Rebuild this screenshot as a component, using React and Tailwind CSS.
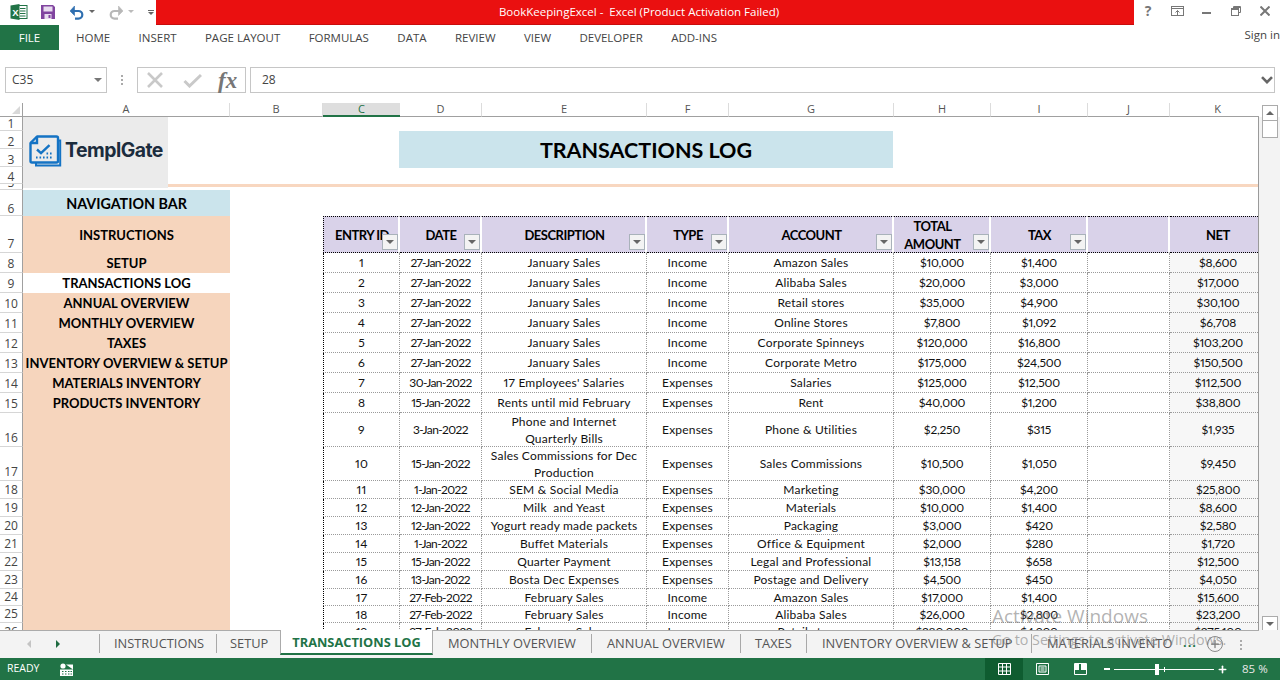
import React from 'react';
import { Plus } from 'lucide-react';

const cols = 'grid-cols-[23px_207px_93px_77px_82px_165px_82px_165px_97px_97px_82px_96px]';

const columnHeads = [
  ['A', 207], ['B', 93], ['C', 77], ['D', 82], ['E', 165], ['F', 82],
  ['G', 165], ['H', 97], ['I', 97], ['J', 82], ['K', 96],
];

const rowHeads = [
  ['1', 14], ['2', 18], ['3', 18], ['4', 17], ['5', 6], ['6', 26], ['7', 37], ['8', 20], ['9', 20],
  ['10', 20], ['11', 20], ['12', 20], ['13', 20], ['14', 20], ['15', 20], ['16', 34], ['17', 34],
  ['18', 18], ['19', 18], ['20', 18], ['21', 18], ['22', 18], ['23', 18], ['24', 17], ['25', 17], ['26', 18],
];

const navItems = [
  { label: 'INSTRUCTIONS', row: 'row-[7]' },
  { label: 'SETUP', row: 'row-[8]' },
  { label: 'TRANSACTIONS LOG', row: 'row-[9]', active: true },
  { label: 'ANNUAL OVERVIEW', row: 'row-[10]' },
  { label: 'MONTHLY OVERVIEW', row: 'row-[11]' },
  { label: 'TAXES', row: 'row-[12]' },
  { label: 'INVENTORY OVERVIEW & SETUP', row: 'row-[13]' },
  { label: 'MATERIALS INVENTORY', row: 'row-[14]' },
  { label: 'PRODUCTS INVENTORY', row: 'row-[15]' },
];

const headers = [
  ['ENTRY ID', true, 'col-[4]'],
  ['DATE', true, 'col-[5]'],
  ['DESCRIPTION', true, 'col-[6]'],
  ['TYPE', true, 'col-[7]'],
  ['ACCOUNT', true, 'col-[8]'],
  ['TOTAL AMOUNT', true, 'col-[9]'],
  ['TAX', true, 'col-[10]'],
  ['', false, 'col-[11]'],
  ['NET', false, 'col-[12]'],
];

const entries = [
  ['1', '27-Jan-2022', 'January Sales', 'Income', 'Amazon Sales', '$10,000', '$1,400', '$8,600'],
  ['2', '27-Jan-2022', 'January Sales', 'Income', 'Alibaba Sales', '$20,000', '$3,000', '$17,000'],
  ['3', '27-Jan-2022', 'January Sales', 'Income', 'Retail stores', '$35,000', '$4,900', '$30,100'],
  ['4', '27-Jan-2022', 'January Sales', 'Income', 'Online Stores', '$7,800', '$1,092', '$6,708'],
  ['5', '27-Jan-2022', 'January Sales', 'Income', 'Corporate Spinneys', '$120,000', '$16,800', '$103,200'],
  ['6', '27-Jan-2022', 'January Sales', 'Income', 'Corporate Metro', '$175,000', '$24,500', '$150,500'],
  ['7', '30-Jan-2022', "17 Employees' Salaries", 'Expenses', 'Salaries', '$125,000', '$12,500', '$112,500'],
  ['8', '15-Jan-2022', 'Rents until mid February', 'Expenses', 'Rent', '$40,000', '$1,200', '$38,800'],
  ['9', '3-Jan-2022', 'Phone and Internet Quarterly Bills', 'Expenses', 'Phone & Utilities', '$2,250', '$315', '$1,935'],
  ['10', '15-Jan-2022', 'Sales Commissions for Dec Production', 'Expenses', 'Sales Commissions', '$10,500', '$1,050', '$9,450'],
  ['11', '1-Jan-2022', 'SEM & Social Media', 'Expenses', 'Marketing', '$30,000', '$4,200', '$25,800'],
  ['12', '12-Jan-2022', 'Milk  and Yeast', 'Expenses', 'Materials', '$10,000', '$1,400', '$8,600'],
  ['13', '12-Jan-2022', 'Yogurt ready made packets', 'Expenses', 'Packaging', '$3,000', '$420', '$2,580'],
  ['14', '1-Jan-2022', 'Buffet Materials', 'Expenses', 'Office & Equipment', '$2,000', '$280', '$1,720'],
  ['15', '15-Jan-2022', 'Quarter Payment', 'Expenses', 'Legal and Professional', '$13,158', '$658', '$12,500'],
  ['16', '13-Jan-2022', 'Bosta Dec Expenses', 'Expenses', 'Postage and Delivery', '$4,500', '$450', '$4,050'],
  ['17', '27-Feb-2022', 'February Sales', 'Income', 'Amazon Sales', '$17,000', '$1,400', '$15,600'],
  ['18', '27-Feb-2022', 'February Sales', 'Income', 'Alibaba Sales', '$26,000', '$2,800', '$23,200'],
  ['19', '27-Feb-2022', 'February Sales', 'Income', 'Retail stores', '$280,000', '$4,900', '$275,100'],
];

const tabs = [
  ['INSTRUCTIONS', 'w-[117px] pl-[14px]'],
  ['SETUP', 'w-[64px] pl-[13px]'],
];

const tabsAfter = [
  ['MONTHLY OVERVIEW', 'w-[159px] pl-[15px]'],
  ['ANNUAL OVERVIEW', 'w-[149px] pl-[15px]'],
  ['TAXES', 'w-[66px] pl-[14px]'],
  ['INVENTORY OVERVIEW & SETUP', 'w-[225px] pl-[15px]'],
];

const cellTracking = (c) => {
  if (c === 1) return 'tracking-[-0.6px]';
  if (c === 5 || c === 6 || c === 8) return 'tracking-[-0.2px]';
  return 'tracking-[0.2px]';
};

const FilterButton = () => (
  <span className="absolute right-0 bottom-[2px] w-[16px] h-[16px] bg-[#f3f3f3] border border-[#a9b2ba] flex items-center justify-center">
    <span className="w-0 h-0 border-x-[4px] border-x-transparent border-t-[4px] border-t-[#666]" />
  </span>
);

const ExcelIcon = () => (
  <svg width="18" height="16" viewBox="0 0 18 16">
    <rect x="7" y="1.5" width="10" height="13" fill="#fff" stroke="#217346" />
    <path d="M10 4.5h5.5M10 7h5.5M10 9.5h5.5M10 12h5.5" stroke="#217346" />
    <path d="M0.5 1.5 9.5 0v16l-9-1.5z" fill="#217346" />
    <text x="2.2" y="11.5" fontSize="9.5" fontWeight="700" fill="#fff" fontFamily="Liberation Sans, sans-serif">X</text>
  </svg>
);

const SaveIcon = () => (
  <svg width="14" height="14" viewBox="0 0 14 14">
    <path d="M0 0h12l2 2v12H0z" fill="#80449f" />
    <rect x="2.5" y="1.5" width="9" height="5" fill="#e8dcef" />
    <rect x="3.5" y="9" width="7" height="5" fill="#e8dcef" />
    <rect x="7.5" y="10" width="2" height="3" fill="#80449f" />
  </svg>
);

const TurnIcon = ({ color, flip }) => (
  <svg width="16" height="15" viewBox="0 0 16 15" className={flip ? '-scale-x-100' : ''}>
    <path d="M3 6h6.5a3.8 3.8 0 0 1 0 7.6H6" fill="none" stroke={color} strokeWidth="2.2" />
    <path d="M5.5 1 1 6l4.5 4.5z" fill={color} stroke={color} strokeWidth="0.6" />
  </svg>
);

const SmallCaret = ({ color = '#666' }) => (
  <span className="w-0 h-0 border-x-[3px] border-x-transparent border-t-[3px]" style={{ borderTopColor: color }} />
);

const LogoMark = () => (
  <svg width="33" height="32" viewBox="0 0 33 32">
    <path d="M29 5.5h2.2V30.5H7V27.5" fill="none" stroke="#1473c4" strokeWidth="2" />
    <path d="M8 1.5h19.5a1.5 1.5 0 0 1 1.5 1.5v23a1.5 1.5 0 0 1-1.5 1.5H3a1.5 1.5 0 0 1-1.5-1.5V8z" fill="#ebebeb" stroke="#1473c4" strokeWidth="2.4" strokeLinejoin="round" />
    <path d="M8 1.5V8H1.5" fill="none" stroke="#1473c4" strokeWidth="2.4" />
    <path d="M8 14.5l4 3.6 8.5-8" fill="none" stroke="#1473c4" strokeWidth="2.4" />
    <path d="M7 22.5h1.6M10.5 22.5h1.6M14 22.5h1.6M17.5 22.5h1.6M21 22.5h1.6M21 18.5h1.6M17.5 18.5h1.6" stroke="#1473c4" strokeWidth="2" />
  </svg>
);

export default function App() {
  const sans = { fontFamily: '"Open Sans", sans-serif' };

  return (
    <div className="w-[1280px] h-[680px] overflow-hidden bg-white relative text-[#444]" style={sans}>
      {/* title bar */}
      <div className="h-[25px] flex items-start">
        <div className="w-[156px] h-[24px] flex items-center pl-[10px]">
          <ExcelIcon />
          <span className="ml-[13px]"><SaveIcon /></span>
          <span className="ml-[14px]"><TurnIcon color="#2f6fb0" /></span>
          <span className="ml-[4px] mb-[1px] flex"><SmallCaret /></span>
          <span className="ml-[13px]"><TurnIcon color="#b8b8b8" flip /></span>
          <span className="ml-[4px] mb-[1px] flex"><SmallCaret color="#bbb" /></span>
          <span className="ml-[14px] flex flex-col items-center gap-[1px]">
            <span className="w-[6px] h-[1px] bg-[#666]" />
            <SmallCaret />
          </span>
        </div>
        <div className="w-[978px] h-[25px] bg-[#ea1010] border-b border-[#c80c0c] flex items-center justify-center pr-[12px] text-white text-[11.5px]">
          <span className="whitespace-pre">BookKeepingExcel -  Excel (Product Activation Failed)</span>
        </div>
        <div className="flex-1 h-[22px] flex items-center text-[#777]">
          <span className="ml-[9px] w-[10px] text-[14px] font-bold text-center leading-none">?</span>
          <svg className="ml-[18px]" width="14" height="10" viewBox="0 0 14 10" fill="none" stroke="#777">
            <rect x="0.5" y="0.5" width="12" height="9" />
            <path d="M0 2.5h13M6.5 9V4.5M4.5 6.5l2-2 2 2" />
          </svg>
          <span className="ml-[17px] w-[9px] h-[2px] bg-[#777] mt-[3px]" />
          <svg className="ml-[20px]" width="10" height="10" viewBox="0 0 10 10" fill="none" stroke="#777">
            <path d="M2.5 2V.5h7v6H8" />
            <rect x="0.5" y="2.5" width="7" height="7" />
            <path d="M0.5 3.5h7M2.5 1.5h7" />
          </svg>
          <svg className="ml-[19px]" width="10" height="10" viewBox="0 0 10 10" fill="none" stroke="#777" strokeWidth="2">
            <path d="M0.5.5l9 9M9.5.5l-9 9" />
          </svg>
        </div>
      </div>

      {/* ribbon tabs */}
      <div className="h-[42px] flex items-start text-[11.5px] text-[#444]">
        <div className="w-[59px] h-[25px] bg-[#217346] text-white flex items-center justify-center">FILE</div>
        <div className="flex-1 flex items-center h-[25px] gap-[28.4px] pl-[17px]">
          <span>HOME</span>
          <span>INSERT</span>
          <span>PAGE LAYOUT</span>
          <span>FORMULAS</span>
          <span>DATA</span>
          <span>REVIEW</span>
          <span>VIEW</span>
          <span>DEVELOPER</span>
          <span>ADD-INS</span>
        </div>
        <span className="h-[20px] flex items-center">Sign in</span>
      </div>

      {/* formula bar */}
      <div className="h-[26px] flex items-stretch pl-[5px] pr-[5px] text-[12px] text-[#444]">
        <div className="w-[102px] border border-[#c6c6c6] flex items-center justify-between pl-[6px] pr-[4px]">
          <span>C35</span>
          <span className="w-0 h-0 border-x-[4px] border-x-transparent border-t-[4px] border-t-[#777]" />
        </div>
        <div className="w-[30px] flex flex-col items-center justify-center gap-[2px]">
          <span className="w-[2px] h-[2px] bg-[#aaa]" />
          <span className="w-[2px] h-[2px] bg-[#aaa]" />
          <span className="w-[2px] h-[2px] bg-[#aaa]" />
        </div>
        <div className="w-[109px] border border-[#c6c6c6] flex items-center pl-[8px]">
          <svg width="18" height="16" viewBox="0 0 18 16" fill="none" stroke="#c9c9c9" strokeWidth="2.6">
            <path d="M2 1l14 14M16 1L2 15" />
          </svg>
          <svg className="ml-[19px]" width="19" height="15" viewBox="0 0 19 15" fill="none" stroke="#c9c9c9" strokeWidth="3">
            <path d="M1.5 8l5 5L18 2" />
          </svg>
          <span className="ml-[16px] text-[23px] leading-none italic font-bold text-[#777]" style={{ fontFamily: '"Liberation Serif", serif' }}>fx</span>
        </div>
        <div className="w-[4px]" />
        <div className="flex-1 border border-[#c6c6c6] flex items-center justify-between pl-[11px] pr-[1px]">
          <span>28</span>
          <svg width="12" height="8" viewBox="0 0 12 8" fill="none" stroke="#666" strokeWidth="2.6">
            <path d="M1 1.2l5 5 5-5" />
          </svg>
        </div>
      </div>

      {/* column headers */}
      <div className="h-[24px] pt-[10px] flex text-[11px] text-[#555] w-[1259px] overflow-hidden">
        <div className="w-[23px] h-[14px] shrink-0 border-r border-b border-[#a0a0a0] flex items-end justify-end pr-[2px] pb-[2px]">
          <span className="w-0 h-0 border-l-[8px] border-l-transparent border-b-[8px] border-b-[#d8d8d8]" />
        </div>
        {columnHeads.map(([name, width]) => (
          <div
            key={name}
            style={{ width }}
            className={name === 'C'
              ? 'h-[14px] shrink-0 bg-[#dedede] border-b-2 border-[#217346] text-[#217346] flex items-center justify-center'
              : 'h-[14px] shrink-0 border-r border-b border-r-[#dcdcdc] border-b-[#a0a0a0] flex items-center justify-center'}
          >
            {name}
          </div>
        ))}
      </div>

      {/* sheet + scrollbar */}
      <div className="flex h-[513px] bg-[#f3f3f3]">
        <div className={`w-[1259px] shrink-0 h-[513px] overflow-hidden grid ${cols} content-start bg-white border-r border-[#9a9a9a]`} style={{ gridTemplateRows: rowHeads.map((r) => `${r[1]}px`).join(' ') }}>
          {rowHeads.map(([label], i) => (
            <div
              key={label}
              style={{ gridRow: i + 1 }}
              className={`col-[1] border-r border-b border-r-[#a0a0a0] border-b-[#d6d6d6] overflow-hidden flex items-end justify-center text-[12px] text-[#444] bg-white ${i < 6 ? 'leading-[13px]' : 'leading-[16px]'}`}
            >
              {label}
            </div>
          ))}

          {/* logo */}
          <div className="col-[2/4] row-[1/6]">
            <div className="w-[145px] h-[71px] bg-[#ebebeb] flex items-center pl-[6px] gap-[3px] pb-[4px]">
              <LogoMark />
              <span className="text-[19.4px] font-bold tracking-[-0.5px] text-[#1b2c3d] leading-none" style={{ fontFamily: 'Inter, sans-serif' }}>TemplGate</span>
            </div>
          </div>

          {/* peach rule */}
          <div className="col-[2/13] row-[5] pl-[145px]">
            <div className="h-[3px] bg-[#f8d7c0]" />
          </div>

          {/* title */}
          <div className="col-[5/9] row-[2/4] mb-[-1px] ml-[-1px] mr-[1px] pt-[2px] bg-[#cbe4ec] flex items-center justify-center text-[21.5px] font-bold text-black" style={{ fontFamily: 'Lato, sans-serif' }}>
            TRANSACTIONS LOG
          </div>

          {/* navigation */}
          <div className="col-[2] row-[6] pt-[2px] bg-[#cbe4ec] flex items-center justify-center text-[14.3px] font-bold text-black" style={{ fontFamily: 'Lato, sans-serif' }}>
            NAVIGATION BAR
          </div>
          <div className="col-[2] row-[16/27] bg-[#f6d5bd]" />
          {navItems.map((item) => (
            <div
              key={item.label}
              className={`col-[2] ${item.row} pt-[2px] flex items-center justify-center text-[13px] font-bold text-black whitespace-nowrap ${item.active ? 'bg-white' : 'bg-[#f6d5bd]'}`}
              style={{ fontFamily: 'Lato, sans-serif' }}
            >
              {item.label}
            </div>
          ))}

          {/* table header */}
          {headers.map(([label, filter, col]) => (
            <div
              key={col}
              className={`${col} row-[7] relative bg-[#d9d2e9] border-y border-y-black border-r-[2px] border-r-white [border-style:dotted_solid_dotted_dotted] pl-[2px] flex items-center justify-center text-center text-[13px] tracking-[-0.5px] leading-[18px] font-bold text-black ${col === 'col-[4]' ? 'border-l border-l-black whitespace-nowrap' : ''} ${label === 'TOTAL AMOUNT' ? 'px-[20px]' : ''}`}
              style={{ fontFamily: 'Lato, sans-serif' }}
            >
              {label}
              {filter && <FilterButton />}
            </div>
          ))}

          {/* table body */}
          {entries.map((entry, r) => {
            const row = r + 8;
            const cells = [...entry.slice(0, 7), '', entry[7]];
            return cells.map((text, c) => (
              <div
                key={c}
                style={{ gridRow: row, gridColumn: c + 4, fontFamily: 'Lato, sans-serif' }}
                className={`flex items-center justify-center text-center text-[12px] leading-[17px] ${cellTracking(c)} proportional-nums text-[#111] border-b border-r border-dotted border-[#9a9a9a] whitespace-pre-wrap overflow-hidden ${c === 0 ? 'border-l border-l-black' : ''} ${c === 8 ? 'bg-[#f7f7f7] border-r-0' : ''} ${c === 2 ? 'px-[4px]' : ''}`}
              >
                {text}
              </div>
            ));
          })}
        </div>

        {/* vertical scrollbar */}
        <div className="w-[21px] shrink-0 pl-[3px] flex flex-col mt-[-12px] h-[526px]">
          <div className="w-[16px] h-[16px] bg-white border border-[#ababab] flex items-center justify-center">
            <span className="w-0 h-0 border-x-[4px] border-x-transparent border-b-[4px] border-b-[#666]" />
          </div>
          <div className="w-[16px] h-[17px] bg-white border border-t-0 border-[#ababab]" />
          <div className="flex-1" />
          <div className="w-[16px] h-[15px] bg-white border border-[#ababab] flex items-center justify-center">
            <span className="w-0 h-0 border-x-[4px] border-x-transparent border-t-[4px] border-t-[#666]" />
          </div>
        </div>
      </div>

      {/* sheet tabs */}
      <div className="h-[28px] bg-[#f3f3f3] flex items-start text-[12.85px] text-[#555] relative">
        <div className="absolute left-0 top-0 w-[1259px] h-[1px] bg-[#ababab]" />
        <div className="w-[100px] h-[19px] mt-[4px] flex items-center border-r border-[#a8a8a8] pl-[27px]">
          <span className="w-0 h-0 border-y-[4px] border-y-transparent border-r-[4px] border-r-[#c4c4c4]" />
          <span className="ml-[25px] w-0 h-0 border-y-[4px] border-y-transparent border-l-[4px] border-l-[#1e6b41]" />
        </div>
        {tabs.map(([name, width]) => (
          <div key={name} className={`${width} h-[19px] mt-[4px] flex items-center border-r border-[#a8a8a8] whitespace-nowrap`}>
            {name}
          </div>
        ))}
        <div className="relative w-[153px] h-[25px] -ml-[1px] pt-[2px] bg-white border-x border-[#ababab] border-b-2 border-b-[#217346] flex items-center justify-center font-bold text-[12.8px] text-[#217346] whitespace-nowrap">
          TRANSACTIONS LOG
        </div>
        {tabsAfter.map(([name, width]) => (
          <div key={name} className={`${width} h-[19px] mt-[4px] flex items-center border-r border-[#a8a8a8] whitespace-nowrap`}>
            {name}
          </div>
        ))}
        <div className="w-[151px] h-[19px] mt-[4px] flex items-center pl-[15px] whitespace-nowrap overflow-hidden">MATERIALS INVENTO</div>
        <span className="h-[19px] mt-[3px] flex items-center font-bold text-[#217346] tracking-[1px] w-[24px]">...</span>
        <span className="mt-[6px] w-[16px] h-[16px] rounded-full border border-[#8a8a8a] flex items-center justify-center">
          <Plus size={12} color="#777" strokeWidth={2.5} />
        </span>
        <span className="mt-[10px] ml-[17px] flex flex-col gap-[2px]">
          <span className="w-[2px] h-[2px] bg-[#aaa]" />
          <span className="w-[2px] h-[2px] bg-[#aaa]" />
          <span className="w-[2px] h-[2px] bg-[#aaa]" />
        </span>
      </div>

      {/* status bar */}
      <div className="h-[22px] bg-[#217346] flex items-center text-white text-[10.5px]">
        <span className="ml-[7px] w-[33px]">READY</span>
        <svg className="ml-[20px]" width="13" height="13" viewBox="0 0 13 13">
          <circle cx="3" cy="3" r="2.6" fill="#fff" />
          <path d="M6 1.5h7V13H0V6.5h13" fill="#fff" />
          <path d="M2 8.5h1.5M5 8.5h1.5M8 8.5h1.5M2 11h1.5M5 11h1.5M8 11h1.5M10.5 8.5H12M10.5 11H12" stroke="#217346" />
        </svg>
        <div className="flex-1" />
        <div className="w-[38px] h-[22px] bg-[#0f5c30] flex items-center justify-center">
          <svg width="13" height="12" viewBox="0 0 13 12" fill="none" stroke="#fff">
            <path d="M.5.5h12v11H.5zM.5 4h12M.5 8h12M4.5.5v11M8.5.5v11" />
          </svg>
        </div>
        <div className="w-[38px] flex items-center justify-center">
          <svg width="13" height="12" viewBox="0 0 13 12" fill="none" stroke="#fff">
            <path d="M.5.5h12v11H.5zM3 3h7v6H3zM4.5 5h4M4.5 7h4" />
          </svg>
        </div>
        <div className="w-[38px] flex items-center justify-center">
          <svg width="13" height="12" viewBox="0 0 13 12">
            <path d="M.5.5h12v11H.5z" fill="none" stroke="#fff" />
            <path d="M1 1h4v6H1zM7 1h5v6H7z" fill="#fff" />
          </svg>
        </div>
        <span className="ml-[5px] w-[6px] h-[2px] bg-white" />
        <div className="ml-[4px] w-[100px] h-[1px] bg-white relative">
          <span className="absolute left-[41px] -top-[5px] w-[4px] h-[11px] bg-white" />
          <span className="absolute left-[50px] -top-[2px] w-[1px] h-[5px] bg-white" />
        </div>
        <span className="ml-[3px]"><Plus size={11} color="#fff" strokeWidth={3.5} /></span>
        <span className="ml-[14px] w-[30px] text-[11.5px] text-[#e8e8e8] whitespace-nowrap">85 %</span>
        <div className="w-[8px]" />
      </div>

      {/* activation watermark */}
      <div className="absolute left-[992px] top-[603px] text-[#808080]/60 pointer-events-none">
        <div className="text-[19px] leading-[26px] whitespace-nowrap">Activate Windows</div>
        <div className="text-[14.3px] leading-[18px] mt-[2px] whitespace-nowrap">Go to Settings to activate Windows.</div>
      </div>
    </div>
  );
}
